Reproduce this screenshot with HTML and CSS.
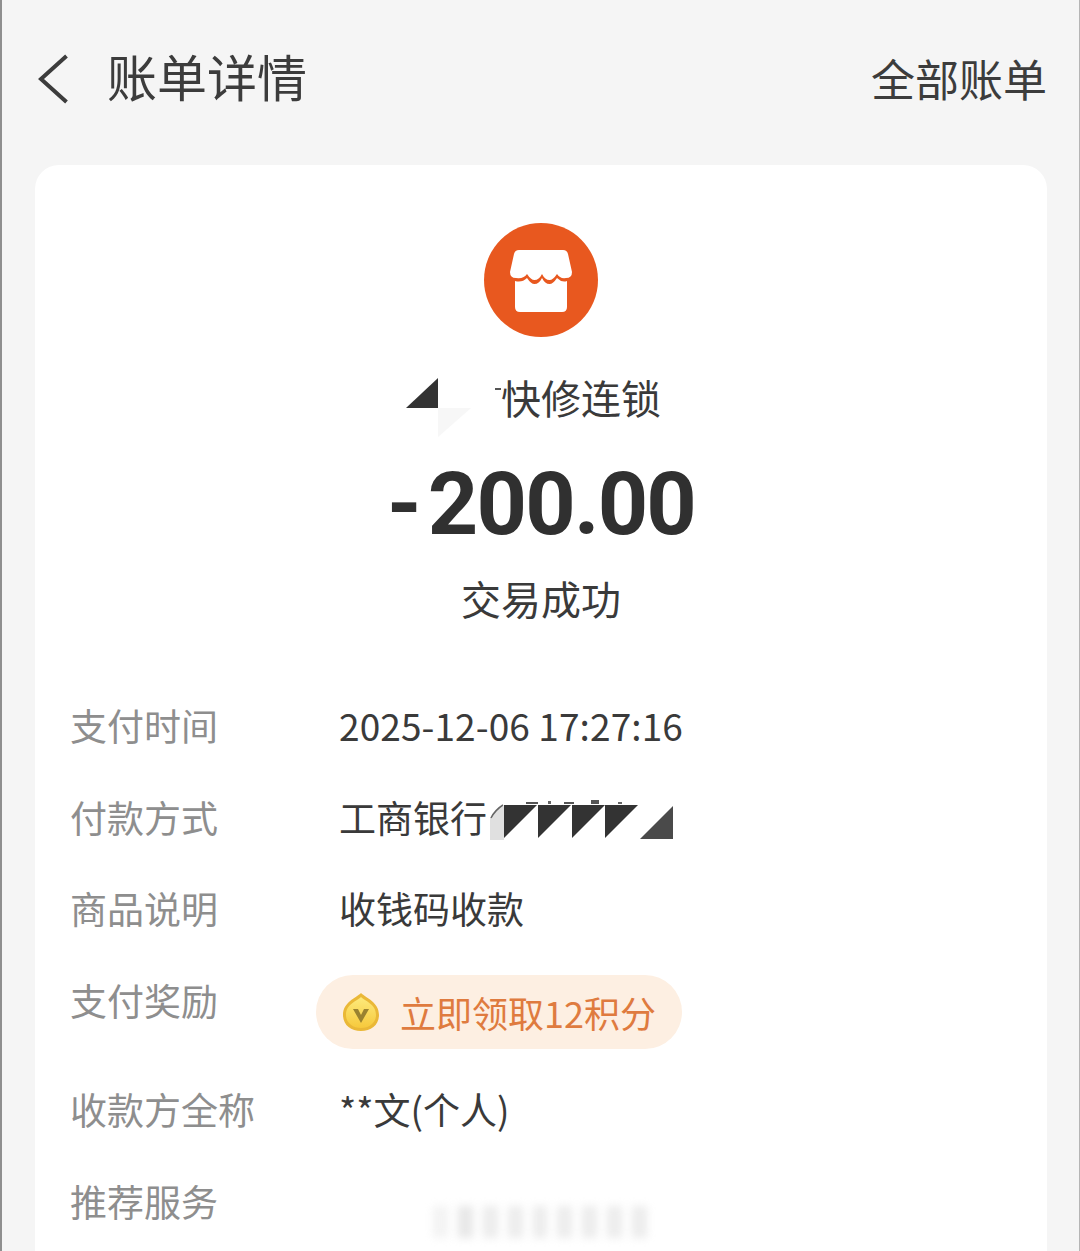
FILE: index.html
```html
<!DOCTYPE html>
<html lang="zh-CN">
<head>
<meta charset="utf-8">
<title>账单详情</title>
<link rel="stylesheet" href="styles.css">
</head>
<body>
<div class="page">
  <header class="topbar">
    <div class="topbar-left">
      <svg class="back" viewBox="0 0 30 50" width="30" height="50"><path d="M28.5 2 L3 25 L28.5 48" fill="none" stroke="#3c3c3c" stroke-width="4"/></svg>
      <h1 class="title">账单详情</h1>
    </div>
    <div class="all-bills">全部账单</div>
  </header>
  <main class="card">
    <section class="summary">
      <svg class="logo" viewBox="0 0 114 114" width="114" height="114">
        <circle cx="57" cy="57" r="57" fill="#e8581f"/>
        <path d="M35 27 L79 27 Q83 27 84 31 L88 49 Q88 55 82 55 Q76 56 73 51 Q69 57 65.5 57 Q61 57 58 51 Q55 57 50.5 57 Q47 57 43 51 Q40 56 32 55 Q26 55 26 49 L30 31 Q31 27 35 27 Z" fill="#fff"/>
        <path d="M31 58 Q38 60 43 55 Q47 61 50.5 61 Q55 61 58 55 Q61 61 65.5 61 Q69 61 73 55 Q78 60 83 58 L83 84 Q83 89 78 89 L36 89 Q31 89 31 84 Z" fill="#fff"/>
      </svg>
      <div class="merchant">
        <span class="merchant-mask">
          <svg class="mask-art" viewBox="0 0 100 70" width="100" height="70">
            <polygon points="0,33 32,3 32,33" fill="#333"/>
            <polygon points="32,33 65,33 32,62" fill="#f7f7f7"/>
            <rect x="89" y="13" width="6" height="2" fill="#555"/>
          </svg>
        </span>
        <span>快修连锁</span>
      </div>
      <div class="amount"><span class="minus">-</span>200.00</div>
      <div class="status">交易成功</div>
    </section>
    <section class="rows">
      <div class="row">
        <div class="label">支付时间</div>
        <div class="value date">2025-12-06 17:27:16</div>
      </div>
      <div class="row">
        <div class="label">付款方式</div>
        <div class="value bank">工商银行
          <svg class="bank-mask" viewBox="0 -6 186 42" width="186" height="42">
            <path d="M2 36 L2 14 Q6 6 16 2 L16 36 Z" fill="#e0e0e0"/>
            <path d="M3 14 Q7 6 15 1" fill="none" stroke="#666" stroke-width="1.5"/>
            <rect x="38" y="-2" width="12" height="2" fill="#555"/>
            <rect x="60" y="-3" width="3" height="3" fill="#666"/>
            <rect x="76" y="-2" width="10" height="2" fill="#555"/>
            <rect x="103" y="-4" width="8" height="4" fill="#555"/>
            <rect x="130" y="-2" width="4" height="2" fill="#666"/>
            <polygon points="16,1 49,1 16,34" fill="#333"/>
            <polygon points="50,1 83,1 50,34" fill="#333"/>
            <polygon points="84,1 117,1 84,34" fill="#333"/>
            <polygon points="117,1 150,1 117,34" fill="#333"/>
            <polygon points="152,35 185,2 185,35" fill="#4a4a4a"/>
          </svg>
        </div>
      </div>
      <div class="row">
        <div class="label">商品说明</div>
        <div class="value">收钱码收款</div>
      </div>
      <div class="row row-reward">
        <div class="label">支付奖励</div>
        <div class="pill">
          <svg class="coin" viewBox="0 0 38 40" width="38" height="40">
            <defs>
              <linearGradient id="gold" x1="0" y1="0" x2="0" y2="1">
                <stop offset="0" stop-color="#fdea7c"/>
                <stop offset="1" stop-color="#f6c93c"/>
              </linearGradient>
            </defs>
            <path d="M19 1 C24 6 37 10 37 23 C37 33 29 39 19 39 C9 39 1 33 1 23 C1 10 14 6 19 1 Z" fill="#eab837"/>
            <path d="M19 5 C23 9 34 12 34 23 C34 31 27 36 19 36 C11 36 4 31 4 23 C4 12 15 9 19 5 Z" fill="url(#gold)"/>
            <path d="M11 17 L19 31 L27 17 L22 17 L19 23 L16 17 Z" fill="#9a8230"/>
          </svg>
          <span class="pill-text">立即领取12积分</span>
        </div>
      </div>
      <div class="row">
        <div class="label">收款方全称</div>
        <div class="value">**文(个人)</div>
      </div>
      <div class="row">
        <div class="label">推荐服务</div>
        <div class="value">
          <div class="smudge">
            <i class="s s1"></i><i class="s s2"></i><i class="s"></i><i class="s"></i><i class="s"></i><i class="s"></i><i class="s"></i><i class="s"></i><i class="s"></i>
          </div>
        </div>
      </div>
    </section>
  </main>
</div>
</body>
</html>
```
FILE: styles.css
```css
* { box-sizing: border-box; }
html, body { margin: 0; padding: 0; }
body {
  width: 1080px;
  height: 1251px;
  overflow: hidden;
  background: #f5f5f5;
  font-family: "Noto Sans CJK SC", "Noto Sans", sans-serif;
  color: #3a3a3a;
}
.page {
  height: 1251px;
  overflow: hidden;
  border-left: 2px solid #8f8f8f;
  border-right: 1px solid #b5b5b5;
  padding: 0 32px 0 33px;
}
.topbar {
  height: 165px;
  display: flex;
  align-items: flex-start;
  justify-content: space-between;
  padding-top: 50px;
}
.topbar-left { display: flex; align-items: center; gap: 39px; height: 58px; padding-left: 3px; }
.back { display: block; }
.title { margin: 0 0 8px; font-size: 50px; line-height: 58px; font-weight: 400; color: #3c3c3c; }
.all-bills { font-size: 44px; line-height: 58px; color: #3c3c3c; margin-top: -1px; }
.card {
  background: #fff;
  border-radius: 24px 24px 0 0;
  height: 1200px;
  padding: 58px 36px 0;
}
.summary { display: flex; flex-direction: column; align-items: center; }
.logo { display: block; }
.merchant { margin-top: 35px; display: flex; font-size: 40px; line-height: 50px; color: #3a3a3a; }
.merchant-mask { position: relative; width: 80px; height: 50px; }
.mask-art { position: absolute; left: -15px; top: 3px; }
.amount { margin-top: 30px; font-family: Roboto, sans-serif; font-weight: 700; font-size: 88px; line-height: 104px; color: #303030; letter-spacing: -1.8px; }
.minus { margin-right: 8px; }
.status { margin-top: 17px; font-size: 40px; line-height: 50px; color: #3a3a3a; }
.rows { margin-top: 77px; display: flex; flex-direction: column; }
.row { display: grid; grid-template-columns: 269px 1fr; height: 91.7px; align-items: start; }
.label { font-size: 37px; line-height: 50px; color: #8e8e8e; margin-left: -1px; }
.value { font-size: 37px; line-height: 50px; color: #3a3a3a; position: relative; margin-left: -1px; }
.date { letter-spacing: 0.1px; }
.bank { white-space: nowrap; }
.bank-mask { position: absolute; left: 149px; top: 6px; }
.row-reward { height: 109px; }
.pill {
  margin: 0 0 0 -24px;
  width: 366px;
  height: 74px;
  border-radius: 37px;
  background: #fdefe2;
  display: flex;
  align-items: center;
  padding-left: 26px;
  gap: 20px;
}
.coin { display: block; flex: none; }
.pill-text { font-size: 36px; line-height: 50px; color: #df7b3f; white-space: nowrap; }
.smudge { position: relative; margin: 30px 0 0 94px; width: 214px; height: 32px; display: flex; gap: 10px; filter: blur(4px); opacity: .35; }
.s { display: block; flex: 1; background: #c9c9c9; }
.s1 { background: #ddd; }
.s2 { background: #bbb; }
```
